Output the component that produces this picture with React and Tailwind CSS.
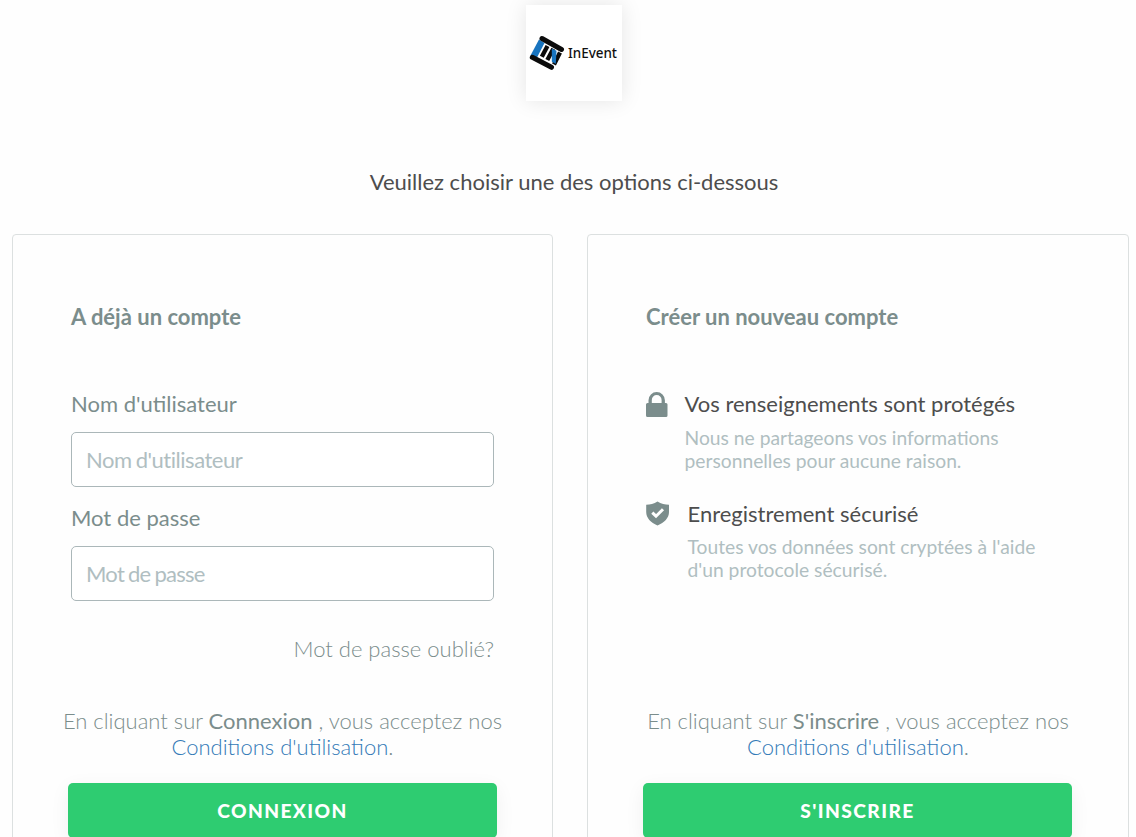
const LockIcon = () => (
  <svg viewBox="0 0 22 25" className="mt-[3px] h-[25px] w-[22px] shrink-0 fill-[#7b8d8c]">
    <path
      fillRule="evenodd"
      d="M2.5 11V8.3a8.2 8.2 0 0 1 16.4 0V11H20a1.5 1.5 0 0 1 1.5 1.5v11A1.5 1.5 0 0 1 20 25H1.5A1.5 1.5 0 0 1 0 23.5v-11A1.5 1.5 0 0 1 1.5 11zM5.8 11h9.8V8a4.9 4.9 0 0 0-9.8 0z"
    />
  </svg>
);

const ShieldIcon = () => (
  <svg viewBox="0 0 24 25" className="mt-[2px] h-[25px] w-[24px] shrink-0">
    <path className="fill-[#7b8d8c]" d="M11.5 0.5C8 2.6 4 3.8 0.2 3.8V11c0 6 4.5 10.5 11.3 13.5C18.4 21.5 23 17 23 11V3.8C19.2 3.8 15 2.6 11.5 0.5z" />
    <path d="M6.3 11.6l3.7 3.6 7-7" fill="none" stroke="#fff" strokeWidth="3" />
  </svg>
);

const Logo = () => (
  <svg viewBox="0 0 96 96" className="h-24 w-24">
    <path fill="#1874bf" d="M13 34.5L4.5 50.5l6 3L18.5 38z" />
    <g fill="none" stroke="#0b0b0b">
      <path d="M16 33.5L35.5 44.5" strokeWidth="5" strokeLinecap="round" />
      <path d="M6.3 52.3L25.5 62.3" strokeWidth="5" strokeLinecap="round" />
      <path d="M21.5 41L15.8 51.8M27.3 43.8L21.3 55M34 47.5L28 59.5" strokeWidth="4.3" />
    </g>
    <path fill="#1874bf" d="M25.8 43.5l4.7 2.3-0.7 13-4-2z" />
    <text x="42" y="53" textLength="49" lengthAdjust="spacingAndGlyphs" fill="#111" fontSize="14.5" fontFamily="'Noto Sans', sans-serif" fontWeight="500">
      InEvent
    </text>
  </svg>
);

const Field = ({ label, type, tracking }) => (
  <label className="block">
    <span className="block leading-[30px]">{label}</span>
    <input
      type={type}
      placeholder={label}
      className={`mt-[13px] block h-[55px] w-full rounded-[5px] border border-[#abb7b9] bg-white px-3.5 [word-spacing:-1px] outline-none placeholder:text-[#b0bec1] ${tracking}`}
    />
  </label>
);

const Feature = ({ icon, title, lines, className, textClassName }) => (
  <div className={`flex ${className}`}>
    {icon}
    <div>
      <h3 className="leading-[30px] text-[#4d4d4d]">{title}</h3>
      <p className={`text-[19.25px] leading-[23px] text-[#b0bec1] ${textClassName}`}>
        {lines[0]}
        <br />
        {lines[1]}
      </p>
    </div>
  </div>
);

const Submit = ({ action }) => (
  <div className="-mx-[3px]">
    <p className="-mx-3 text-center font-light leading-[26px]">
      En cliquant sur <span className="font-normal">{action}</span> , vous acceptez nos
      <br />
      <a href="#" className="text-[#337ab7]">Conditions d'utilisation</a>.
    </p>
    <button
      type="button"
      className="mt-[23px] h-[55px] w-[429px] rounded-[5px] bg-[#2ecc71] pt-px text-[19.2px] font-black uppercase tracking-[1.4px] text-white shadow-[0_5px_20px_rgba(0,0,0,0.06)]"
    >
      {action}
    </button>
  </div>
);

export default function App() {
  return (
    <div className="h-[837px] w-[1136px] overflow-hidden bg-[#fefefe] font-['Lato',sans-serif] text-[22px] text-[#7b8d8c]">
      <header className="flex w-[1148px] flex-col items-center pt-[5px]">
        <div className="bg-white shadow-[0_0_20px_rgba(0,0,0,0.1)]">
          <Logo />
        </div>
        <h1 className="mt-[66px] leading-[30px] text-[#4d4d4d]">Veuillez choisir une des options ci-dessous</h1>
      </header>

      <main className="ml-3 mt-[37px] flex gap-[34px]">
        <section className="h-[660px] w-[541px] shrink-0 rounded-[4px] border border-[#dce0e0] px-[58px] pt-[67px]">
          <h2 className="font-bold leading-[30px]">A déjà un compte</h2>
          <form className="mt-[57px]">
            <Field label="Nom d'utilisateur" type="text" tracking="tracking-[-0.48px]" />
            <div className="mt-4">
              <Field label="Mot de passe" type="password" tracking="tracking-[-0.72px]" />
            </div>
            <a href="#" className="mt-[33px] block text-right font-light leading-[30px]">Mot de passe oublié?</a>
            <div className="mt-[44px]">
              <Submit action="Connexion" />
            </div>
          </form>
        </section>

        <section className="h-[660px] w-[542px] shrink-0 rounded-[4px] border border-[#dce0e0] px-[58px] pt-[67px]">
          <h2 className="font-bold leading-[30px]">Créer un nouveau compte</h2>
          <div className="mt-[57px] h-[319px]">
            <Feature
              className="gap-[16.5px]"
              textClassName="mt-[7px]"
              icon={<LockIcon />}
              title="Vos renseignements sont protégés"
              lines={['Nous ne partageons vos informations', 'personnelles pour aucune raison.']}
            />
            <Feature
              className="mt-[27px] gap-[17.5px]"
              textClassName="mt-1.5"
              icon={<ShieldIcon />}
              title="Enregistrement sécurisé"
              lines={["Toutes vos données sont cryptées à l'aide", "d'un protocole sécurisé."]}
            />
          </div>
          <Submit action="S'inscrire" />
        </section>
      </main>
    </div>
  );
}
